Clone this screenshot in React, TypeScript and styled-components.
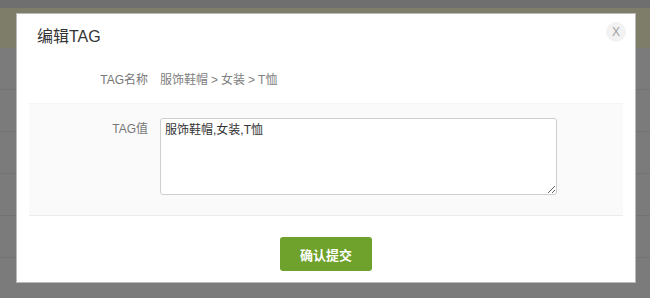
import React from "react";
import styled, { createGlobalStyle } from "styled-components";

const Global = createGlobalStyle`
  html, body { margin: 0; padding: 0; }
  body {
    background: #7b7b7b;
    font-family: "Liberation Sans", "Noto Sans CJK SC", sans-serif;
    width: 650px;
    height: 298px;
    overflow: hidden;
  }
`;

const Page = styled.div`
  display: flex;
  flex-direction: column;
  height: 298px;
  overflow: hidden;
`;

const TopStrip = styled.div`
  height: 8px;
  flex: none;
  background: #6f6f6f;
`;

const NoticeBand = styled.div`
  height: 40px;
  flex: none;
  background: #7e7d69;
`;

const PageRow = styled.div`
  height: 41px;
  flex: none;
  border-bottom: 1px solid #737373;
`;

const Modal = styled.div`
  position: fixed;
  left: 16px;
  top: 13px;
  width: 620px;
  height: 270px;
  box-sizing: border-box;
  background: #fff;
  border: 1px solid #b9b9b9;
  display: flex;
  flex-direction: column;
`;

const Header = styled.div`
  height: 46px;
  box-sizing: border-box;
  padding: 14px 20px 0;
`;

const Title = styled.h3`
  margin: 0;
  font-size: 16px;
  line-height: 18px;
  font-weight: normal;
  color: #333;
`;

const Close = styled.button`
  position: absolute;
  top: 8px;
  right: 9px;
  width: 20px;
  height: 20px;
  border-radius: 50%;
  border: none;
  padding: 0;
  background: #f2f2f2;
  color: #a0a0a0;
  font-family: "Liberation Sans", sans-serif;
  font-size: 12px;
  line-height: 20px;
  text-align: center;
`;

const Body = styled.div`
  margin: 0 12px;
  display: flex;
  flex-direction: column;
`;

const FormRow = styled.div<{ $shaded?: boolean }>`
  display: grid;
  grid-template-columns: 119px 1fr;
  column-gap: 12px;
  align-items: start;
  box-sizing: border-box;
  padding: ${(p) => (p.$shaded ? "14px 0 20px" : "10px 0 13px")};
  background: ${(p) => (p.$shaded ? "#fafafa" : "transparent")};
  border-top: ${(p) => (p.$shaded ? "1px solid #f4f4f4" : "none")};
  border-bottom: ${(p) => (p.$shaded ? "1px solid #ececec" : "none")};
`;

const Label = styled.div<{ $offset?: number }>`
  text-align: right;
  font-size: 12px;
  line-height: 20px;
  color: #777;
  padding-top: ${(p) => p.$offset ?? 0}px;
`;

const Value = styled.div`
  font-size: 12px;
  line-height: 20px;
  color: #808080;
`;

const Sep = styled.span`
  margin: 0 3px;
`;

const TextArea = styled.textarea`
  width: 397px;
  height: 77px;
  box-sizing: border-box;
  border: 1px solid #cfcfcf;
  border-radius: 3px;
  padding: 3px 4px;
  font-family: "Liberation Sans", "Noto Sans CJK SC", sans-serif;
  font-size: 12px;
  line-height: 16px;
  color: #333;
  background: #fff;
  outline: none;
  display: block;
`;

const Footer = styled.div`
  display: flex;
  justify-content: center;
  padding-top: 21px;
`;

const Submit = styled.button`
  width: 92px;
  height: 34px;
  border: none;
  border-radius: 3px;
  background: #6fa22c;
  color: #fff;
  font-family: "Liberation Sans", "Noto Sans CJK SC", sans-serif;
  font-size: 13px;
  font-weight: bold;
`;

export default function App() {
  return (
    <>
      <Global />
      <Page>
        <TopStrip />
        <NoticeBand />
        {Array.from({ length: 6 }).map((_, i) => (
          <PageRow key={i} />
        ))}
      </Page>
      <Modal>
        <Header>
          <Title>编辑TAG</Title>
        </Header>
        <Close>X</Close>
        <Body>
          <FormRow>
            <Label>TAG名称</Label>
            <Value>
              服饰鞋帽<Sep>&gt;</Sep>女装<Sep>&gt;</Sep>T恤
            </Value>
          </FormRow>
          <FormRow $shaded>
            <Label $offset={1}>TAG值</Label>
            <TextArea defaultValue="服饰鞋帽,女装,T恤" />
          </FormRow>
        </Body>
        <Footer>
          <Submit>确认提交</Submit>
        </Footer>
      </Modal>
    </>
  );
}
